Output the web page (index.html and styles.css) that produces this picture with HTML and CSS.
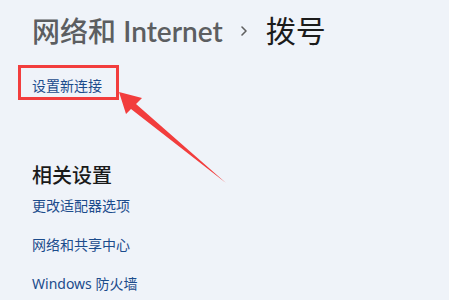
FILE: index.html
```html
<!DOCTYPE html>
<html lang="zh-CN">
<head>
<meta charset="utf-8">
<title>拨号</title>
<link rel="stylesheet" href="styles.css">
</head>
<body>
<main class="page">
  <h1 class="crumb">
    <span class="crumb-parent">网络和 <span class="latin">Internet</span></span>
    <svg class="crumb-sep" width="8" height="12" viewBox="0 0 8 12"><path d="M2 2 L6 6 L2 10" fill="none" stroke="#5f5f5f" stroke-width="1.6" stroke-linecap="round" stroke-linejoin="round"/></svg>
    <span class="crumb-current">拨号</span>
  </h1>
  <a class="link first" href="#">设置新连接</a>
  <h2 class="section-title">相关设置</h2>
  <a class="link" href="#">更改适配器选项</a>
  <a class="link" href="#">网络和共享中心</a>
  <a class="link" href="#">Windows 防火墙</a>
</main>
<svg class="annotation" width="449" height="300" viewBox="0 0 449 300">
  <rect x="19.5" y="66.5" width="98" height="32" fill="none" stroke="#f23d3d" stroke-width="3"/>
  <polygon points="119,92 142,98 136,104 226,183 131,109 126,114" fill="#f23d3d"/>
</svg>
</body>
</html>
```

FILE: styles.css
```css
html, body {
  margin: 0;
  padding: 0;
}
body {
  background: #eff3f9;
  width: 449px;
  height: 300px;
  overflow: hidden;
  position: relative;
  font-family: "Noto Sans", "Noto Sans CJK SC", sans-serif;
}
.page {
  display: flex;
  flex-direction: column;
  align-items: flex-start;
  padding: 11px 0 0 32px;
}
.crumb {
  display: flex;
  align-items: center;
  margin: 0;
  font-size: 28px;
  line-height: 40px;
  font-weight: 500;
  white-space: nowrap;
}
.crumb-parent {
  color: #5c5e61;
}
.latin {
  font-family: "Lato", "Noto Sans", sans-serif;
  font-weight: 600;
}
.crumb-sep {
  margin: 0 18px 0 17px;
}
.crumb-current {
  color: #1b1b1b;
  font-weight: 400;
  font-size: 30px;
}
.link {
  font-size: 14px;
  line-height: 20px;
  color: #1c4c8c;
  text-decoration: none;
  margin-top: 19px;
}
.link.first {
  margin-top: 25px;
}
.section-title {
  margin: 66px 0 0;
  font-size: 20px;
  line-height: 28px;
  font-weight: 500;
  color: #1a1a1a;
}
.section-title + .link {
  margin-top: 6px;
}
.annotation {
  position: absolute;
  left: 0;
  top: 0;
  pointer-events: none;
}
```
